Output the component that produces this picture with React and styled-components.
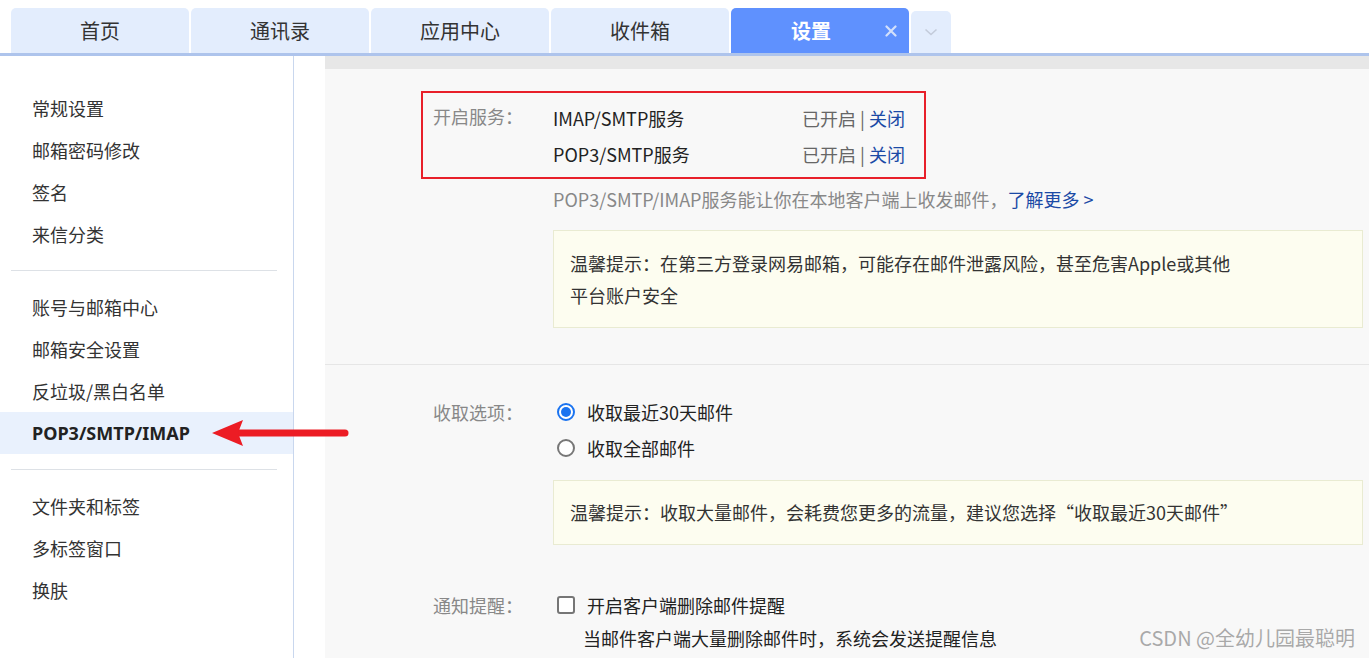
import React from 'react';
import styled, { createGlobalStyle } from 'styled-components';

const GlobalStyle = createGlobalStyle`
  body {
    margin: 0;
    font-family: "Noto Sans CJK SC", "Noto Sans", sans-serif;
    color: #333;
    background: #fff;
  }
`;

const Page = styled.div`
  position: relative;
  width: 100%;
  height: 100vh;
  overflow: hidden;
`;

const TabBar = styled.div`
  display: flex;
  align-items: flex-end;
  gap: 2px;
  height: 56px;
  box-sizing: border-box;
  padding-left: 11px;
  border-bottom: 3px solid #aec4ec;
`;

const Tab = styled.div`
  position: relative;
  width: 178px;
  height: 45px;
  display: flex;
  align-items: center;
  justify-content: center;
  box-sizing: border-box;
  padding-right: ${(p) => (p.$active ? '18px' : '0')};
  border-radius: 5px 5px 0 0;
  background: ${(p) => (p.$active ? '#5f91fe' : '#e3edfd')};
  color: ${(p) => (p.$active ? '#fff' : '#333')};
  font-size: 20px;
  font-weight: ${(p) => (p.$active ? 'bold' : 'normal')};
`;

const CloseIcon = styled.svg`
  position: absolute;
  right: 12px;
  top: 17px;
`;

const MoreTab = styled.div`
  width: 40px;
  height: 42px;
  display: flex;
  align-items: center;
  justify-content: center;
  border-radius: 5px 5px 0 0;
  background: #e3edfd;
`;

const Body = styled.div`
  display: flex;
  height: calc(100vh - 56px);
`;

const Sidebar = styled.nav`
  width: 293px;
  flex-shrink: 0;
  border-right: 1px solid #c9d7ee;
  padding-top: 31px;
`;

const NavItem = styled.div`
  height: 42px;
  line-height: 42px;
  padding-left: 32px;
  font-size: 18px;
  color: ${(p) => (p.$active ? '#222' : '#333')};
  font-weight: ${(p) => (p.$active ? 'bold' : 'normal')};
  font-family: ${(p) => (p.$active ? '"Noto Sans", "Noto Sans CJK SC", sans-serif' : 'inherit')};
  background: ${(p) => (p.$active ? '#e9f1fd' : 'transparent')};
`;

const NavDivider = styled.div`
  height: 1px;
  margin: 15px 16px 15px 11px;
  background: #dde1e6;
`;

const Content = styled.main`
  flex: 1;
  margin-left: 31px;
  background: #f8f8f8;
  border-top: 13px solid #e7e7e7;
`;

const Section = styled.section`
  padding: ${(p) => p.$pad};
  padding-left: 108px;
  border-bottom: ${(p) => (p.$divider ? '1px solid #e6e6e6' : 'none')};
`;

const ServiceBox = styled.div`
  display: grid;
  grid-template-columns: 120px 249px auto;
  width: 505px;
  box-sizing: border-box;
  margin-left: -12px;
  padding: 7px 17px 5px 10px;
  border: 2px solid #e8202a;
`;

const Label = styled.div`
  font-size: 18px;
  color: #888;
  line-height: ${(p) => p.$lh || '36px'};
  grid-row: ${(p) => p.$span || 'auto'};
`;

const Cell = styled.div`
  font-size: 18px;
  line-height: 36px;
  color: ${(p) => p.$muted ? '#666' : '#222'};
  grid-column: ${(p) => p.$col || 'auto'};
  white-space: nowrap;
`;

const Link = styled.a`
  color: #1b4aa6;
  text-decoration: none;
`;

const Desc = styled.div`
  margin: 9px 0 0 120px;
  font-size: 18px;
  line-height: 22px;
  color: #888;
`;

const Note = styled.div`
  margin: ${(p) => p.$margin} 6px 0 120px;
  padding: ${(p) => p.$pad};
  background: #fdfdf0;
  border: 1px solid #e9ebd2;
  font-size: 18px;
  line-height: 32px;
  color: #333;
`;

const NoteText = styled.div`
  max-width: 668px;
`;

const FormRow = styled.div`
  display: grid;
  grid-template-columns: 120px 1fr;
  margin-top: ${(p) => p.$top || '0'};
`;

const Options = styled.div`
  display: flex;
  flex-direction: column;
`;

const Option = styled.label`
  display: flex;
  align-items: center;
  gap: 12px;
  height: 36px;
  padding-left: 4px;
  font-size: 18px;
  color: #222;
`;

const Radio = styled.span`
  width: 18px;
  height: 18px;
  box-sizing: border-box;
  border-radius: 50%;
  border: 2px solid ${(p) => (p.$checked ? '#1a73f0' : '#777')};
  display: flex;
  align-items: center;
  justify-content: center;
  background: #fff;

  &::after {
    content: '';
    display: ${(p) => (p.$checked ? 'block' : 'none')};
    width: 10px;
    height: 10px;
    border-radius: 50%;
    background: #1a73f0;
  }
`;

const Checkbox = styled.span`
  width: 18px;
  height: 18px;
  box-sizing: border-box;
  border-radius: 3px;
  border: 2px solid #767676;
  background: #fff;
`;

const SubText = styled.div`
  margin-left: 30px;
  font-size: 18px;
  line-height: 30px;
  color: #222;
`;

const Arrow = styled.svg`
  position: absolute;
  left: 205px;
  top: 415px;
`;

const Watermark = styled.div`
  position: absolute;
  right: 14px;
  bottom: 8px;
  font-size: 20px;
  line-height: 24px;
  color: #a9a9a9;
  text-shadow: 0 0 1px #fff;
`;

const tabs = ['首页', '通讯录', '应用中心', '收件箱'];

const navGroups = [
  ['常规设置', '邮箱密码修改', '签名', '来信分类'],
  ['账号与邮箱中心', '邮箱安全设置', '反垃圾/黑白名单', 'POP3/SMTP/IMAP'],
  ['文件夹和标签', '多标签窗口', '换肤'],
];

const App = () => {
  return (
    <>
      <GlobalStyle />
      <Page>
        <TabBar>
          {tabs.map((t) => (
            <Tab key={t}>{t}</Tab>
          ))}
          <Tab $active>
            设置
            <CloseIcon width='12' height='12' viewBox='0 0 12 12'>
              <path d='M1.5 1.5 L10.5 10.5 M10.5 1.5 L1.5 10.5' stroke='#d3e0fb' strokeWidth='2.2' strokeLinecap='round' />
            </CloseIcon>
          </Tab>
          <MoreTab>
            <svg width='14' height='8' viewBox='0 0 14 8'>
              <path d='M1.5 1.5 L7 6.5 L12.5 1.5' fill='none' stroke='#c3cbda' strokeWidth='1.6' />
            </svg>
          </MoreTab>
        </TabBar>

        <Body>
          <Sidebar>
            {navGroups.map((group, i) => (
              <React.Fragment key={i}>
                {i > 0 && <NavDivider />}
                {group.map((item) => (
                  <NavItem key={item} $active={item === 'POP3/SMTP/IMAP'}>
                    {item}
                  </NavItem>
                ))}
              </React.Fragment>
            ))}
          </Sidebar>

          <Content>
            <Section $pad='22px 0 36px' $divider>
              <ServiceBox>
                <Label $lh='32px' $span='span 2'>开启服务：</Label>
                <Cell>IMAP/SMTP服务</Cell>
                <Cell $muted>
                  已开启 | <Link>关闭</Link>
                </Cell>
                <Cell $col='2'>POP3/SMTP服务</Cell>
                <Cell $muted>
                  已开启 | <Link>关闭</Link>
                </Cell>
              </ServiceBox>
              <Desc>
                POP3/SMTP/IMAP服务能让你在本地客户端上收发邮件，<Link>了解更多 &gt;</Link>
              </Desc>
              <Note $margin='20px' $pad='16px 16px'>
                <NoteText>
                  温馨提示：在第三方登录网易邮箱，可能存在邮件泄露风险，甚至危害Apple或其他平台账户安全
                </NoteText>
              </Note>
            </Section>

            <Section $pad='29px 0 0'>
              <FormRow>
                <Label>收取选项：</Label>
                <Options>
                  <Option>
                    <Radio $checked />
                    收取最近30天邮件
                  </Option>
                  <Option>
                    <Radio />
                    收取全部邮件
                  </Option>
                </Options>
              </FormRow>
              <Note $margin='14px' $pad='15px 16px 16px'>
                <NoteText>温馨提示：收取大量邮件，会耗费您更多的流量，建议您选择“收取最近30天邮件”</NoteText>
              </Note>
              <FormRow $top='42px'>
                <Label>通知提醒：</Label>
                <Options>
                  <Option>
                    <Checkbox />
                    开启客户端删除邮件提醒
                  </Option>
                  <SubText>当邮件客户端大量删除邮件时，系统会发送提醒信息</SubText>
                </Options>
              </FormRow>
            </Section>
          </Content>
        </Body>

        <Arrow width='150' height='36' viewBox='0 0 150 36'>
          <line x1='32' y1='18' x2='140' y2='18' stroke='#ec1c24' strokeWidth='7' strokeLinecap='round' />
          <polygon points='7,18 38,5 33,18 38,31' fill='#ec1c24' />
        </Arrow>

        <Watermark>CSDN @全幼儿园最聪明</Watermark>
      </Page>
    </>
  );
};

export default App;
